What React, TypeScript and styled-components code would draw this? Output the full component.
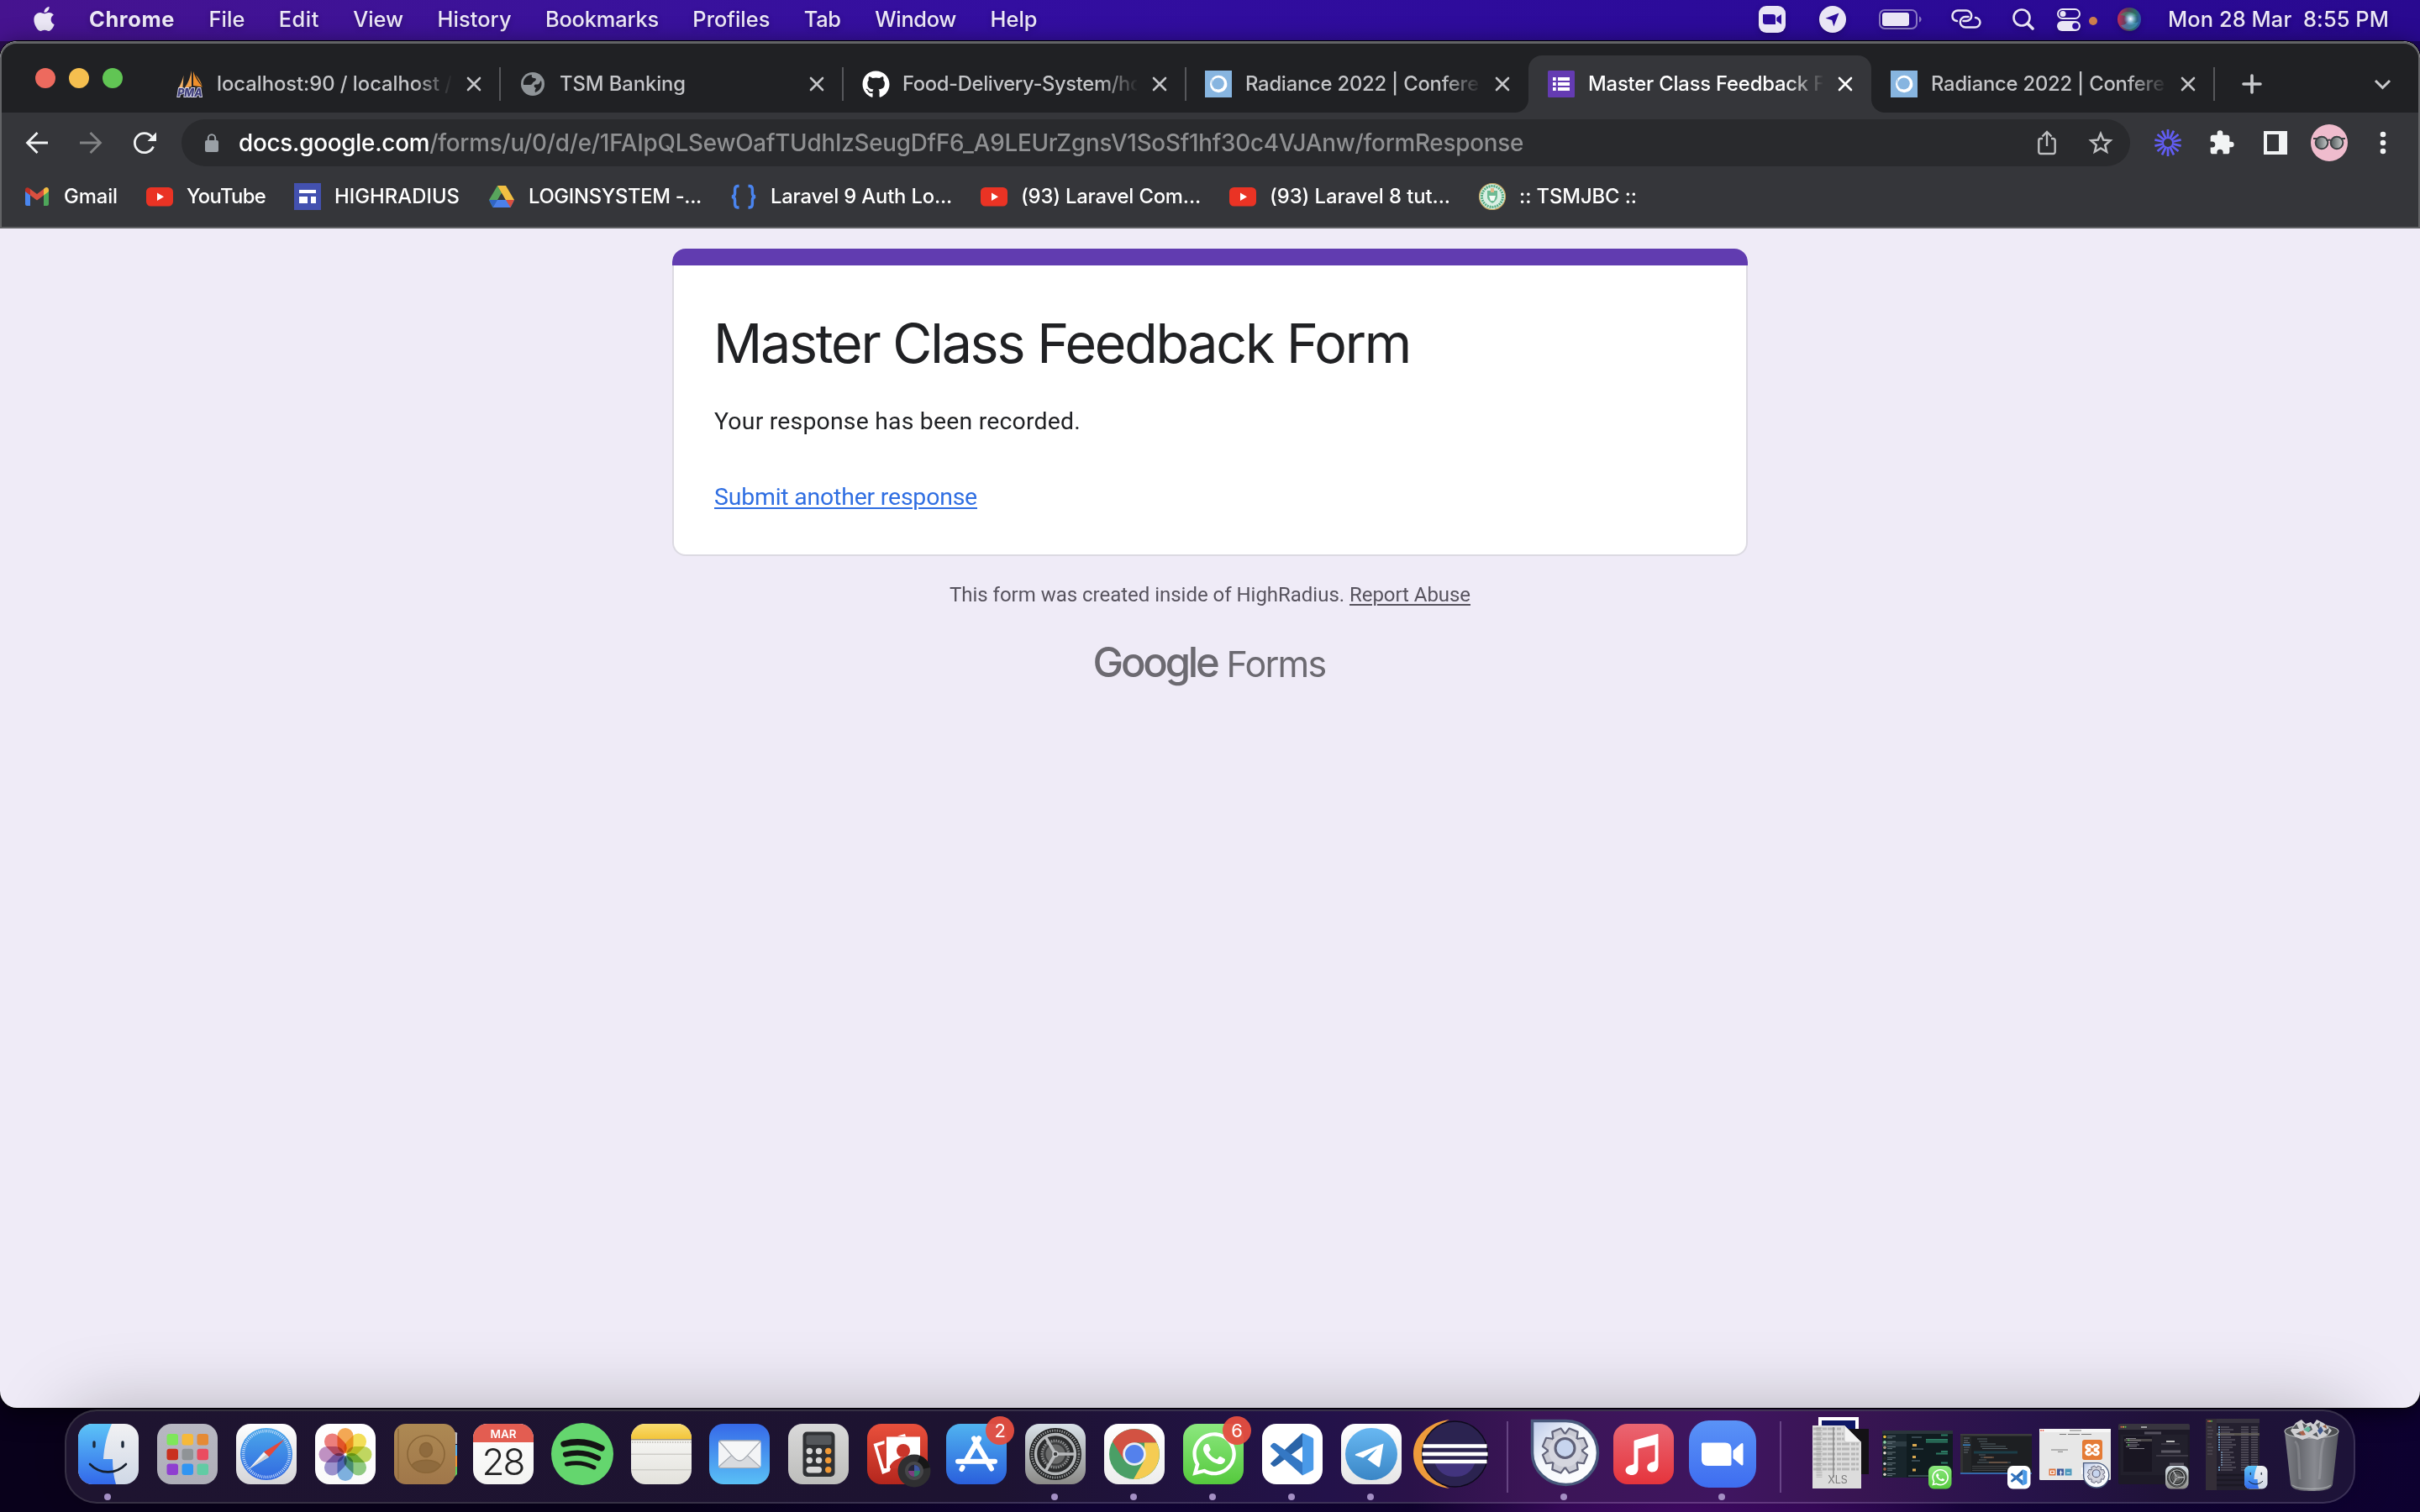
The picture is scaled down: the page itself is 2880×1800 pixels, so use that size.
import React, { useLayoutEffect, useRef, useState } from "react";
import styled, { createGlobalStyle, css } from "styled-components";
import { FaApple, FaGithub, FaWhatsapp } from "react-icons/fa";

const GlobalStyle = createGlobalStyle`
  *, *::before, *::after { box-sizing: border-box; }
  html, body { margin: 0; padding: 0; background: #0a0220; }
  body { width: 2880px; height: 1800px; overflow: hidden; -webkit-font-smoothing: antialiased; }
  svg { display: block; flex: none; overflow: visible; }
`;

const UI = `Inter, "Liberation Sans", sans-serif`;
const BODY = `Roboto, "Liberation Sans", sans-serif`;

/* ---------- tracked text: letter spacing is derived so a label fills its width ---------- */

const Tracked = styled.span<{ $w: number }>`
  display: block;
  flex: none;
  width: ${(p) => p.$w}px;
  white-space: pre;
`;

function Fit({ w, children }: { w: number; children: React.ReactNode }) {
  const ref = useRef<HTMLSpanElement>(null);
  const [spacing, setSpacing] = useState(0);
  useLayoutEffect(() => {
    const el = ref.current;
    if (!el) return;
    const count = (el.textContent || "").length;
    setSpacing((w - el.getBoundingClientRect().width) / count);
  }, [w]);
  return (
    <Tracked $w={w}>
      <span ref={ref} style={{ letterSpacing: spacing }}>
        {children}
      </span>
    </Tracked>
  );
}

/* ---------- desktop ---------- */

const Desktop = styled.div`
  display: flex;
  flex-direction: column;
  width: 2880px;
  height: 1800px;
  overflow: hidden;
  font-family: ${UI};
  background:
    linear-gradient(90deg, #2b0d52 0, #1c0560 100%) 0 0 / 100% 80px no-repeat,
    radial-gradient(ellipse 330px 120px at 2010px 1800px, #450b6c 0, #3c0a62 45%, transparent 100%),
    linear-gradient(90deg, #0a021c 0, #09021c 800px, #13043a 1300px, #10032f 1830px, #2a0650 2050px, #12033a 2450px, #0e0230 100%);
`;

const MenuBar = styled.header`
  display: flex;
  align-items: center;
  flex: none;
  height: 49px;
  padding: 0 37px 3px 39px;
  color: #ece8f6;
  font-size: 25.4px;
  line-height: 46px;
  text-shadow: 0 2px 6px rgba(0, 0, 0, 0.25);
  background: linear-gradient(90deg, #46138f 0, #3a129b 700px, #330ea0 1200px, #2c0b9a 2000px, #290990 100%);
`;

const Menus = styled.nav`
  display: flex;
  gap: 40.4px;
  margin-left: 40px;
  font-weight: 500;
`;

const Menu = styled.span<{ $strong?: boolean }>`
  font-weight: ${(p) => (p.$strong ? 700 : 500)};
`;

const Status = styled.div`
  display: flex;
  align-items: center;
  margin-left: auto;
  font-weight: 500;
`;

const StatusSlot = styled.span<{ $gap: number }>`
  margin-right: ${(p) => p.$gap}px;
  filter: drop-shadow(0 2px 3px rgba(0, 0, 0, 0.25));
`;

/* ---------- browser window ---------- */

const Window = styled.main`
  display: flex;
  flex-direction: column;
  flex: none;
  height: 1627px;
  overflow: hidden;
  border-radius: 20px;
  background: #efebf7;
  box-shadow: 0 0 0 1px #000, 0 6px 30px rgba(0, 0, 0, 0.6);
`;

const Chrome = styled.div`
  flex: none;
  height: 223px;
  margin-top: 0;
  border: 2px solid #626366;
  border-top: 3px solid #626366;
  border-bottom: 2px solid #5f6063;
  border-radius: 20px 20px 0 0;
  background: #35363a;
  overflow: hidden;
`;

const TabStrip = styled.div`
  display: flex;
  align-items: flex-end;
  height: 82px;
  background: #202124;
`;

const Lights = styled.div`
  display: flex;
  gap: 16px;
  align-self: flex-start;
  width: 185px;
  padding: 29px 0 0 40px;
`;

const Light = styled.i<{ $c: string }>`
  width: 24px;
  height: 24px;
  border-radius: 50%;
  background: ${(p) => p.$c};
`;

const TabBox = styled.div<{ $active?: boolean; $divider?: boolean }>`
  position: relative;
  display: flex;
  align-items: center;
  flex: none;
  width: 408px;
  height: 68px;
  padding-left: 23px;
  color: ${(p) => (p.$active ? "#fff" : "#c4c5c8")};
  font-size: 23.8px;
  font-weight: 450;
  line-height: 34px;
  ${(p) =>
    p.$divider &&
    css`
      &::after {
        content: "";
        width: 2px;
        height: 40px;
        margin-left: auto;
        margin-right: -1px;
        background: #56575b;
      }
    `}
  ${(p) =>
    p.$active &&
    css`
      background: #35363a;
      border-radius: 16px 16px 0 0;
      &::before,
      &::after {
        content: "";
        position: absolute;
        bottom: 0;
        width: 16px;
        height: 16px;
      }
      &::before {
        left: -16px;
        background: radial-gradient(circle at 0 0, transparent 15.5px, #35363a 16.5px);
      }
      &::after {
        right: -16px;
        background: radial-gradient(circle at 100% 0, transparent 15.5px, #35363a 16.5px);
      }
    `}
`;

const TabTitle = styled.span`
  width: 280px;
  margin: 0 17.5px 0 15px;
  padding-left: 1px;
  mask-image: linear-gradient(90deg, #000 236px, transparent 282px);
`;

const StripEnd = styled.div`
  display: flex;
  align-items: center;
  justify-content: space-between;
  flex: 1;
  height: 68px;
  padding: 0 33px 0 33px;
`;

const Toolbar = styled.div`
  display: flex;
  align-items: center;
  height: 72px;
  padding-left: 26px;
`;

const ToolSlot = styled.span<{ $gap: number }>`
  margin-right: ${(p) => p.$gap}px;
`;

const Omnibox = styled.div`
  display: flex;
  align-items: center;
  width: 2319px;
  height: 56px;
  margin-right: 29px;
  padding: 0 19px 0 26px;
  border-radius: 28px;
  color: #8f9092;
  font-size: 27.8px;
  font-weight: 450;
  line-height: 40px;
  background: #292a2d;
`;

const Url = styled.span`
  flex: 1;
  margin-left: 22px;
`;

const Host = styled.b`
  font-weight: 480;
  color: #fff;
`;

const Avatar = styled.span`
  display: grid;
  place-items: center;
  width: 44px;
  height: 44px;
  margin-right: 26px;
  border-radius: 50%;
  background: #efbccd;
`;

const Bookmarks = styled.div`
  display: flex;
  align-items: center;
  height: 64px;
  padding: 0 0 8px 26px;
  color: #fff;
  font-size: 23.8px;
  font-weight: 450;
  line-height: 34px;
`;

const Bookmark = styled.span`
  display: flex;
  align-items: center;
  gap: 16px;
  margin-right: 34px;
`;

/* ---------- page ---------- */

const Page = styled.section`
  display: flex;
  flex-direction: column;
  align-items: center;
  flex: 1;
  padding-top: 24px;
  font-family: ${BODY};
`;

const Card = styled.article`
  width: 1280px;
  height: 366px;
  border: 2px solid #dcdae2;
  border-top: 0;
  border-radius: 16px;
  background: #fff;
  overflow: clip;
  overflow-clip-margin: 2px;
`;

const CardBar = styled.div`
  height: 20px;
  margin: 0 -2px;
  border-radius: 16px 16px 0 0;
  background: #613cb0;
`;

const Title = styled.h1`
  margin: 0;
  padding: 53px 0 0 47px;
  color: #202124;
  font-family: ${UI};
  font-size: 64.5px;
  font-weight: 440;
  line-height: 80px;
`;

const Message = styled.p`
  margin: 33px 0 50px 48px;
  color: #202124;
  font-size: 28.4px;
  line-height: 40px;
`;

const Again = styled.a`
  display: block;
  margin-left: 48px;
  color: #2f6ee2;
  font-size: 28.4px;
  line-height: 40px;
  text-decoration: underline;
  text-decoration-thickness: 2px;
  text-underline-offset: 3px;
`;

const Notice = styled.p`
  display: flex;
  margin: 30px 0 0;
  color: #57535e;
  font-size: 24px;
  line-height: 32px;
`;

const Report = styled.a`
  text-decoration: underline;
  text-decoration-thickness: 2px;
  text-underline-offset: 3px;
`;

const Brand = styled.div`
  display: flex;
  align-items: baseline;
  gap: 11px;
  margin: 33px 2px 0 0;
  color: #6c6a71;
  font-family: ${UI};
  font-size: 43px;
  line-height: 64px;
`;

const BrandName = styled.span`
  font-size: 49px;
  font-weight: 470;
`;

/* ---------- dock ---------- */

const Dock = styled.footer`
  display: flex;
  flex: none;
  width: 2726px;
  height: 112px;
  margin: 2px 0 0 77px;
  padding-left: 3px;
  border: 2px solid rgba(255, 255, 255, 0.19);
  border-radius: 38px;
  background: linear-gradient(90deg, #1e1430 0, #1d1331 1100px, #23124a 1500px, #2a1249 1600px, #3b1556 1740px, #3f1560 1980px, #381552 2130px, #27134a 2330px, #1f1238 2500px, #1d1338 100%);
  background-clip: padding-box;
  background-color: #1e1430;
  box-shadow: 0 0 88px rgba(0, 0, 0, 0.26);
`;

const DockCell = styled.span<{ $running?: boolean }>`
  position: relative;
  display: flex;
  align-items: flex-start;
  justify-content: center;
  flex: none;
  width: 93.95px;
  padding-top: 15px;
  ${(p) =>
    p.$running &&
    css`
      &::after {
        content: "";
        position: absolute;
        bottom: 2px;
        left: 42px;
        width: 8px;
        height: 8px;
        border-radius: 50%;
        background: #a48fc4;
      }
    `}
`;

const DockDivider = styled.i<{ $w: number }>`
  display: flex;
  justify-content: center;
  flex: none;
  width: ${(p) => p.$w}px;
  padding: 12px 0 11px;
  &::after {
    content: "";
    width: 2px;
    background: rgba(200, 170, 230, 0.32);
  }
`;

const Badge = styled.b`
  position: absolute;
  top: 6px;
  right: 2px;
  width: 34px;
  height: 34px;
  border-radius: 50%;
  color: #fff;
  font-size: 22px;
  font-weight: 400;
  line-height: 34px;
  text-align: center;
  background: rgba(230, 78, 64, 0.95);
`;

const MiniBadge = styled.span`
  position: absolute;
  right: 6px;
  bottom: 16px;
`;

/* ---------- menu bar icons ---------- */

const W = "#e9e5f5";

const ZoomStatus = () => (
  <svg width="32" height="32" viewBox="0 0 32 32">
    <rect width="32" height="32" rx="9" fill={W} />
    <path d="M5 10h12a3 3 0 0 1 3 3v9H8a3 3 0 0 1-3-3z M21.300 14l5.700-4v12l-5.700-4z" fill="#2c0b9a" />
  </svg>
);
const TelegramStatus = () => (
  <svg width="32" height="32" viewBox="0 0 32 32">
    <circle cx="16" cy="16" r="16" fill={W} />
    <path d="M23.500 8.500 7.500 14.800l7.700 2.200 2.100 7.600z" fill="#2c0b9a" />
  </svg>
);
const Battery = () => (
  <svg width="51" height="24" viewBox="0 0 51 24">
    <rect x="1" y="1" width="44" height="22" rx="6" fill="none" stroke={W} strokeOpacity=".5" strokeWidth="2" />
    <rect x="4" y="4" width="32" height="16" rx="3" fill={W} />
    <path d="M48 8.500c3.500 1.200 3.500 5.800 0 7z" fill={W} opacity=".5" />
  </svg>
);
const Links = () => (
  <svg width="36" height="24" viewBox="0 0 36 24" fill="none" stroke={W} strokeWidth="2.500" strokeLinecap="round">
    <path d="M7 14C3.500 13.500 1.500 11 1.500 8A6.500 6.500 0 0 1 8 1.500h10A6 6 0 0 1 18 14h-3.500" />
    <path d="M29 10c3 .5 5.500 2.700 5.500 5.700A6 6 0 0 1 28.500 21.500H17A6 6 0 0 1 17 9h3.500" />
  </svg>
);
const SearchIcon = () => (
  <svg width="26" height="26" viewBox="0 0 26 26" fill="none" stroke={W}>
    <circle cx="11" cy="11" r="9.500" strokeWidth="2.600" />
    <path d="m18 18 6 6" strokeWidth="3.600" strokeLinecap="round" />
  </svg>
);
const ControlCentre = () => (
  <svg width="28" height="27" viewBox="0 0 28 27">
    <rect x="1" y="1" width="26" height="11" rx="5.500" fill="none" stroke={W} strokeWidth="2" />
    <circle cx="7" cy="6.500" r="3.500" fill={W} />
    <rect y="15" width="28" height="12" rx="6" fill={W} />
    <circle cx="22" cy="21" r="3.800" fill="#2c0b9a" />
  </svg>
);
const OrangeDot = styled.i`
  width: 10px;
  height: 10px;
  margin-top: 4px;
  margin-right: 24px;
  border-radius: 50%;
  background: #cf7f4d;
`;
const Siri = () => (
  <svg width="28" height="28" viewBox="0 0 28 28">
    <defs>
      <linearGradient id="siri" x1="0" y1=".5" x2="1" y2=".6">
        <stop offset="0" stopColor="#c52d5a" />
        <stop offset=".4" stopColor="#57405c" />
        <stop offset=".7" stopColor="#2d6b62" />
        <stop offset="1" stopColor="#2b55b0" />
      </linearGradient>
      <radialGradient id="siriGlow">
        <stop offset="0" stopColor="#fff" />
        <stop offset=".35" stopColor="#bfe3ff" stopOpacity=".8" />
        <stop offset="1" stopColor="#7fc6ff" stopOpacity="0" />
      </radialGradient>
    </defs>
    <circle cx="14" cy="14" r="14" fill="url(#siri)" />
    <path d="M3 9c6-6 14-5 21 1-5-1-8 1-10 4-4-4-7-5-11-5z" fill="#3f9b6c" opacity=".55" />
    <path d="M4 21c5 0 8-3 10-7 3 4 7 5 11 3-2 9-15 13-21 4z" fill="#4aa3d8" opacity=".5" />
    <circle cx="15.500" cy="13.500" r="8" fill="url(#siriGlow)" />
  </svg>
);

/* ---------- favicons ---------- */

const PmaIcon = () => (
  <svg width="32" height="32" viewBox="0 0 32 32">
    <path d="M8.500 5.500 7.500 20 2 21.500c3-4.500 5-10 6.500-16z" fill="#f3b26a" />
    <path d="M18 0v19l-8.500 2c4.500-6 7-13 8.500-21z" fill="#f0a04a" />
    <path d="M20 1c2 7 6 13 11 18.500L20 18z" fill="#ef8f2a" />
    <path d="M22.500 5c4 3.500 6.500 8 8 13.500z" fill="#f39a35" />
    <text x="16" y="31" textAnchor="middle" fontFamily={UI} fontWeight="800" fontStyle="italic" fontSize="12.500" fill="#3c3c78" stroke="#d9d9ea" strokeWidth="1.800" paintOrder="stroke">
      PMA
    </text>
  </svg>
);
const Globe = () => (
  <svg width="32" height="32" viewBox="0 0 32 32">
    <circle cx="16" cy="16" r="14" fill="#8f9498" />
    <path d="M15 5c-1 3 1 4 3 4 3 0 2 3 0 4-3 1-2 4-5 4H5C4 10 9 5 15 5z" fill="#202124" />
    <path d="M26 12c2 6-1 12-7 14-1-2 0-4 1-5-2-1-3-2-2-4 2-1 4 0 5-1 2-1 1-3 3-4z" fill="#202124" />
  </svg>
);
const Radiance = () => (
  <svg width="32" height="32" viewBox="0 0 32 32">
    <rect width="32" height="32" fill="#87b5e0" />
    <circle cx="16.200" cy="16" r="10.200" fill="#fff" />
    <circle cx="15.800" cy="15.500" r="7" fill="#87b5e0" />
    <path d="M19 21.500c3.500-.5 5.500-3 5.500-6.500l2 3-4 6-4.500.5z" fill="#fff" />
    <path d="M8.500 10.500c-1 4.500 0 8.500 4 11.500" fill="none" stroke="#87b5e0" strokeWidth=".9" />
  </svg>
);
const FormsIcon = () => (
  <svg width="32" height="32" viewBox="0 0 32 32">
    <rect width="32" height="32" rx="1.500" fill="#643bb2" />
    <g fill="#fff">
      <path d="M6 8h3.700v4H6zM6 14h3.700v4H6zM6 20h3.700v4H6zM12 8h14v4H12zM12 14h14v4H12zM12 20h14v4H12z" />
    </g>
  </svg>
);
const Close = ({ c }: { c: string }) => (
  <svg width="18" height="18" viewBox="0 0 18 18" stroke={c} strokeWidth="2.600" strokeLinecap="round">
    <path d="m2 2 14 14M16 2 2 16" />
  </svg>
);

const tabs = [
  { icon: <PmaIcon />, title: "localhost:90 / localhost /", w: 280, divider: true },
  { icon: <Globe />, title: "TSM Banking", w: 150, divider: true },
  { icon: <FaGithub size={33} color="#fff" style={{ margin: "0 -0.5px" }} />, title: "Food-Delivery-System/ho", w: 285, divider: true },
  { icon: <Radiance />, title: "Radiance 2022 | Conferen", w: 292 },
  { icon: <FormsIcon />, title: "Master Class Feedback F", w: 282, active: true },
  { icon: <Radiance />, title: "Radiance 2022 | Conferen", w: 292, divider: true },
];

/* ---------- toolbar icons ---------- */

const Arrow = ({ c, flip }: { c: string; flip?: boolean }) => (
  <svg width="32" height="32" viewBox="0 0 32 32" fill="none" stroke={c} strokeWidth="2.800" transform={flip ? "scale(-1 1)" : undefined}>
    <path d="M29 16H5M16.500 4 4.500 16l12 12" />
  </svg>
);
const Reload = () => (
  <svg width="32" height="32" viewBox="0 0 32 32">
    <path d="M26.500 20.500a11.500 11.500 0 1 1-1.800-11.700" fill="none" stroke="#f1f3f4" strokeWidth="2.800" />
    <path d="M30 3.500V14H19.500z" fill="#f1f3f4" />
  </svg>
);
const Lock = () => (
  <svg width="20" height="24" viewBox="0 0 20 24">
    <rect x="2" y="9" width="16" height="14" rx="2" fill="#9aa0a6" />
    <path d="M5.800 9V6.500a4.200 4.200 0 0 1 8.400 0V9" fill="none" stroke="#9aa0a6" strokeWidth="2" />
  </svg>
);
const Share = () => (
  <svg width="32" height="32" viewBox="0 0 32 32" fill="none" stroke="#bdbec0" strokeWidth="2.400">
    <path d="M11 11H8.500A2.200 2.200 0 0 0 6.300 13.200v13.600A2.200 2.200 0 0 0 8.500 29h15a2.200 2.200 0 0 0 2.200-2.200V13.200A2.200 2.200 0 0 0 23.500 11H21M16 20V4M10.500 8.500 16 3l5.500 5.500" />
  </svg>
);
const Star = () => (
  <svg width="32" height="32" viewBox="0 0 32 32" fill="none" stroke="#bdbec0" strokeWidth="2.500">
    <path d="m16 5 3.200 7.600 8.300.7-6.300 5.400 1.900 8-7.100-4.300-7.100 4.300 1.900-8-6.300-5.400 8.300-.7z" />
  </svg>
);
const Burst = () => (
  <svg width="32" height="32" viewBox="-16 -16 32 32" stroke="#625df5" strokeWidth="2.700">
    {Array.from({ length: 14 }, (_, i) => (
      <path key={i} d="M0-6.500V-16" transform={`rotate(${(i * 360) / 14})`} />
    ))}
    <circle r="6" fill="none" strokeWidth="2" />
  </svg>
);
const Puzzle = () => (
  <svg width="32" height="32" viewBox="0 0 24 24">
    <path
      d="M20.500 11H19V7c0-1.100-.9-2-2-2h-4V3.500a2.500 2.500 0 0 0-5 0V5H4c-1.100 0-1.990.9-1.990 2v3.800H3.500a2.700 2.700 0 0 1 0 5.400H2V20c0 1.100.9 2 2 2h3.800v-1.500a2.700 2.700 0 0 1 5.400 0V22H17c1.100 0 2-.9 2-2v-4h1.500a2.500 2.500 0 0 0 0-5z"
      fill="#f1f3f4"
    />
  </svg>
);
const SidePanel = () => (
  <svg width="32" height="32" viewBox="0 0 32 32">
    <path d="M2 2h28v28H2zM6 6v20h14V6z" fill="#f1f3f4" fillRule="evenodd" />
  </svg>
);
const Glasses = () => (
  <svg width="38" height="18" viewBox="0 0 38 18">
    <defs>
      <linearGradient id="lens" x1="0" x2="1">
        <stop offset="0" stopColor="#4e5658" />
        <stop offset="1" stopColor="#c9cdcc" />
      </linearGradient>
    </defs>
    <g fill="url(#lens)" stroke="#3c4143" strokeWidth="2">
      <circle cx="10" cy="9" r="7.300" />
      <circle cx="28" cy="9" r="7.300" />
    </g>
    <path d="M0 4h5M33 4h5M16 7c1.500-2 4.500-2 6 0" stroke="#3c4143" strokeWidth="2.200" fill="none" />
  </svg>
);
const Dots = () => (
  <svg width="32" height="32" viewBox="0 0 32 32" fill="#f1f3f4">
    <circle cx="16" cy="6" r="3.300" />
    <circle cx="16" cy="16" r="3.300" />
    <circle cx="16" cy="26" r="3.300" />
  </svg>
);

/* ---------- bookmark icons ---------- */

const Gmail = () => (
  <svg width="32" height="32" viewBox="0 0 32 32">
    <path d="M2 9v16a2 2 0 0 0 2 2h4V13z" fill="#4a86ee" />
    <path d="M30 9v16a2 2 0 0 1-2 2h-4V13z" fill="#4ea75a" />
    <path d="M24 7v7.500l6-4.500V8.200c0-3.200-3-4.200-5-2.200z" fill="#f2bd42" />
    <path d="M8 14.500V7l8 6 8-6v7.500l-8 6z" fill="#d95040" />
    <path d="M2 8.200V10l6 4.500V7L7 6.200C5 4.600 2 5.200 2 8.200z" fill="#bb3026" />
  </svg>
);
const YouTube = () => (
  <svg width="32" height="32" viewBox="0 0 32 32">
    <rect y="5" width="32" height="22.500" rx="5.500" fill="#ea3324" />
    <path d="m13 11.500 8 4.800-8 4.800z" fill="#fff" />
  </svg>
);
const Sites = () => (
  <svg width="32" height="32" viewBox="0 0 32 32">
    <rect width="32" height="32" fill="#4351af" />
    <path d="M6 8h20v4H6zM6 16h10v8H6zM20 16h6v8h-6z" fill="#fff" />
  </svg>
);
const Drive = () => (
  <svg width="32" height="32" viewBox="0 0 32 32">
    <path d="M11 3h10l-5 9z" fill="#3b8045" />
    <path d="M11 3 1 20l4.500 9L16 12z" fill="#58a55c" />
    <path d="m21 3 10 17H20.500L11 3z" fill="#f1bf42" />
    <path d="M10.500 20H31l-4.500 9h-21z" fill="#4b80ea" />
    <path d="M1 20h10l-5.500 9z" fill="#3165c4" />
    <path d="M21 20h10l-4.500 9z" fill="#d95040" />
    <path d="m16 12-4.700 8h9.400z" fill="#35363a" />
  </svg>
);
const Braces = () => (
  <svg width="32" height="32" viewBox="0 0 32 32" fill="none" stroke="#4a84ee" strokeWidth="3.400">
    <path d="M10.500 3.500H9C6.500 3.500 5.600 4.800 5.600 7.500v4.500c0 2.500-.6 3.800-3.600 4.200 3 .4 3.600 1.800 3.600 4.300v4.500c0 2.700.9 4 3.400 4h1.500" />
    <path d="M21.500 3.500H23c2.500 0 3.400 1.300 3.400 4v4.500c0 2.500.6 3.800 3.600 4.200-3 .4-3.600 1.800-3.600 4.300v4.500c0 2.700-.9 4-3.400 4h-1.500" />
  </svg>
);
const Seal = () => (
  <svg width="32" height="32" viewBox="0 0 32 32">
    <circle cx="16" cy="16" r="15.500" fill="#d9efe3" stroke="#c0a560" strokeWidth="1.200" />
    <circle cx="16" cy="16" r="12.500" fill="none" stroke="#58ad85" strokeWidth="3" strokeDasharray="2 1" />
    <path d="M10 9h12v7c0 4-3 6-6 8-3-2-6-4-6-8z" fill="#6dba93" />
    <path d="M14 6h4v5h-4z" fill="#e3b98a" />
    <path d="M12 15h8l-2 6h-4z" fill="#f3faf5" />
  </svg>
);

const bookmarks = [
  { icon: <Gmail />, label: "Gmail", w: 64 },
  { icon: <YouTube />, label: "YouTube", w: 94 },
  { icon: <Sites />, label: "HIGHRADIUS", w: 149 },
  { icon: <Drive />, label: "LOGINSYSTEM -...", w: 206 },
  { icon: <Braces />, label: "Laravel 9 Auth Lo...", w: 216 },
  { icon: <YouTube />, label: "(93) Laravel Com...", w: 214 },
  { icon: <YouTube />, label: "(93) Laravel 8 tut...", w: 215 },
  { icon: <Seal />, label: ":: TSMJBC ::", w: 140 },
];

/* ---------- dock icons ---------- */

type IconProps = { s?: number };

function Tile({ s = 72, id, top, bottom, children }: { s?: number; id: string; top: string; bottom: string; children?: React.ReactNode }) {
  return (
    <svg width={s} height={s} viewBox="0 0 72 72">
      <defs>
        <linearGradient id={id} x1="0" y1="0" x2="0" y2="1">
          <stop offset="0" stopColor={top} />
          <stop offset="1" stopColor={bottom} />
        </linearGradient>
        <clipPath id={`${id}-clip`}>
          <rect width="72" height="72" rx="17" />
        </clipPath>
      </defs>
      <rect width="72" height="72" rx="17" fill={`url(#${id})`} />
      <g clipPath={`url(#${id}-clip)`}>{children}</g>
    </svg>
  );
}

const Finder = ({ s }: IconProps) => (
  <Tile s={s} id={`finder${s || ""}`} top="#f1f1f3" bottom="#cfd8e6">
    <linearGradient id={`finder-blue${s || ""}`} x1="0" y1="0" x2="0" y2="1">
      <stop offset="0" stopColor="#5cc4f7" />
      <stop offset="1" stopColor="#3268ea" />
    </linearGradient>
    <path d="M0 0h40c-6 13-9 27-10 42h11c0 10 1 20 4 30H0z" fill={`url(#finder-blue${s || ""})`} />
    <path d="M19 22v5M53 22v5" stroke="#1d2a3a" strokeWidth="3.400" strokeLinecap="round" />
    <path d="M14 48c12 12.500 31 12.500 43 0" fill="none" stroke="#16202e" strokeWidth="2.600" strokeLinecap="round" />
  </Tile>
);

const padColors = ["#7ee65b", "#f6b93a", "#e58a35", "#c9301f", "#8f9396", "#ea4c60", "#8f3fd0", "#3195f2", "#62cba4"];
const Launchpad = () => (
  <Tile id="pad" top="#b8b8c2" bottom="#aeaeb8">
    {padColors.map((c, i) => (
      <rect key={c} x={11.500 + (i % 3) * 18} y={12 + Math.floor(i / 3) * 17.700} width="13.500" height="13.500" rx="3" fill={c} />
    ))}
  </Tile>
);

const Safari = () => (
  <Tile id="safari" top="#ffffff" bottom="#d5d5d8">
    <linearGradient id="safari-dial" x1="0" y1="0" x2="0" y2="1">
      <stop offset="0" stopColor="#4ba8ea" />
      <stop offset="1" stopColor="#3168e0" />
    </linearGradient>
    <circle cx="36" cy="36" r="31" fill="url(#safari-dial)" />
    <circle cx="36" cy="36" r="27.500" fill="none" stroke="#d6e6fb" strokeWidth="3.600" strokeDasharray=".9 1.500" />
    <path d="M57.500 18.500 39 39.500l-6-6z" fill="#e5483a" />
    <path d="M15 54 33 33.500l6 6z" fill="#f4f4f6" />
    <path d="M15 54 39 39.500l-3-3z" fill="#c9ccd2" />
  </Tile>
);

const petals = ["#f29a38", "#f1d93c", "#b6cf45", "#7cc06c", "#69a3d9", "#8a7fc4", "#b57fb8", "#e96a66"];
const petalTurns = [0, 45, 90, 135, 180, 225, 270, 315];
const Petal = styled.rect`
  mix-blend-mode: multiply;
`;
const Photos = () => (
  <Tile id="photos" top="#ffffff" bottom="#fafafa">
    {petalTurns.map((a, i) => (
      <Petal key={a} x="26.500" y="5" width="19" height="30" rx="9.500" fill={petals[i]} opacity=".86" transform={`rotate(${a} 36 36.500)`} />
    ))}
  </Tile>
);

const Contacts = () => (
  <svg width="76" height="72" viewBox="-2 0 76 72">
    <path d="M70 10h3a2 2 0 0 1 2 3v11h-5z" fill="#b9b9be" />
    <path d="M70 25h5v13h-5z" fill="#58aee8" />
    <path d="M70 38h5v13h-5z" fill="#ee9334" />
    <path d="M70 51h5v9l-5 5z" fill="#5ccd5c" />
    <linearGradient id="leather" x1="0" y1="0" x2="0" y2="1">
      <stop offset="0" stopColor="#ad8953" />
      <stop offset="1" stopColor="#a0774a" />
    </linearGradient>
    <rect width="73" height="72" rx="14" fill="url(#leather)" />
    <path d="M5 6v60" stroke="#8f6b3c" strokeWidth="1.500" />
    <g fill="none" stroke="#8a6638" strokeWidth="1.600">
      <circle cx="38" cy="36" r="22" />
      <ellipse cx="38" cy="31" rx="7.500" ry="8.500" fill="#8f6b3e" />
      <path d="M21 50c4-9 30-9 34 0-8 11-26 11-34 0z" fill="#8f6b3e" />
    </g>
  </svg>
);

const Calendar = () => (
  <Tile id="cal" top="#ffffff" bottom="#f3f3f1">
    <path d="M0 0h72v22H0z" fill="#e35d51" />
    <text x="36" y="17" textAnchor="middle" fontFamily={UI} fontWeight="600" fontSize="13.500" fill="#fff">
      MAR
    </text>
    <text x="35.500" y="61" textAnchor="middle" fontFamily={UI} fontWeight="300" fontSize="44" letterSpacing="-2" fill="#222">
      28
    </text>
  </Tile>
);

const Spotify = () => (
  <svg width="74" height="74" viewBox="0 0 74 74">
    <circle cx="37" cy="37" r="37" fill="#64d66e" />
    <g fill="none" stroke="#141414" strokeLinecap="round">
      <path d="M15 25c15-4 31-2.500 45 5" strokeWidth="7.400" />
      <path d="M17 37.500c13-3.500 27-2 39 4.500" strokeWidth="6.200" />
      <path d="M18.500 49c11-2.500 22-1.500 32.500 4" strokeWidth="5" />
    </g>
  </svg>
);

const Notes = () => (
  <Tile id="notes" top="#fbfbfa" bottom="#e3e2dc">
    <linearGradient id="notes-top" x1="0" y1="0" x2="0" y2="1">
      <stop offset="0" stopColor="#f9dc70" />
      <stop offset="1" stopColor="#f3c53a" />
    </linearGradient>
    <path d="M0 0h72v18H0z" fill="url(#notes-top)" />
    <path d="M0 18.700h72" stroke="#a79a78" strokeWidth="1.400" />
    <path d="M1 22h72" stroke="#c9c7c0" strokeWidth="2" strokeDasharray="1.500 1.500" />
    <path d="M0 36.300h72M0 54.700h72" stroke="#cfcec9" strokeWidth="1.400" />
  </Tile>
);

const Mail = () => (
  <Tile id="mail" top="#3669e8" bottom="#5ac0f6">
    <rect x="11" y="20" width="50.500" height="32.500" rx="3" fill="#f3f4f6" />
    <path d="m11.500 51 19-17h11l19 17c-1 1.500-2 1.500-3 1.500H14.500c-1.500 0-2.500-.5-3-1.500z" fill="#d9dbdf" stroke="#a6abb3" strokeWidth="1.200" />
    <path d="M12 21c9 9 15 18 20 21.500 2.500 1.800 6 1.800 8.500 0C46 38 52 30 61 21c-1-1-2-1-3-1H14.500c-1 0-2 0-2.500 1z" fill="#f6f7f8" stroke="#a6abb3" strokeWidth="1.300" />
  </Tile>
);

const Calculator = () => (
  <Tile id="calc" top="#d9d9d9" bottom="#bdbdbb">
    <rect x="17.500" y="9.500" width="38" height="53.500" rx="5" fill="#2f3134" />
    <rect x="21.500" y="13.500" width="30" height="11.500" rx="2.500" fill="#54575b" />
    {[32.5, 43.5].map((y) => (
      <g key={y}>
        <circle cx="25.300" cy={y} r="3.700" fill="#d8d8d8" />
        <circle cx="36.500" cy={y} r="3.700" fill="#d8d8d8" />
        <circle cx="47.700" cy={y} r="3.700" fill="#f19a37" />
      </g>
    ))}
    <rect x="21.500" y="51" width="18.500" height="7.500" rx="3.700" fill="#d8d8d8" />
    <circle cx="47.700" cy="54.700" r="3.700" fill="#f19a37" />
  </Tile>
);

const PhotoBooth = () => (
  <svg width="76" height="76" viewBox="-2 0 76 76">
    <linearGradient id="booth" x1="0" y1="0" x2="0" y2="1">
      <stop offset="0" stopColor="#e9503c" />
      <stop offset="1" stopColor="#b4261d" />
    </linearGradient>
    <rect width="72" height="72" rx="17" fill="url(#booth)" />
    <path d="M36 14.500 45 12l1 3.500z" fill="#fff" />
    <path d="m7.500 24 13-4v4l-8.500 2.800L20 53h8l-1 3.500-9 3.500z" fill="#fff" />
    <path d="M23 15.500h40V53H23z" fill="#fff" />
    <circle cx="43" cy="32" r="8" fill="#c9352a" />
    <path d="M27 53V50c4-7 10-8 13-10h6c3 2 9 3 13 10v3z" fill="#c9352a" />
    <circle cx="56" cy="56" r="19.500" fill="#2f2f31" />
    <path d="M56 56 63 38a19.500 19.500 0 0 1 12 14z" fill="#111" opacity=".8" />
    <circle cx="56" cy="56" r="11" fill="#47474a" />
    <circle cx="56" cy="56" r="7.200" fill="#25253a" />
    <path d="M56 49a7 7 0 0 1 7 7h-7z" fill="#3f56a0" />
    <path d="M49 56a7 7 0 0 0 7 7v-7z" fill="#7c3d80" />
    <path d="M56 56h7a7 7 0 0 1-7 7z" fill="#2f8068" />
  </svg>
);

const AppStore = () => (
  <Tile id="store" top="#50b3f0" bottom="#2a5fdc">
    <g stroke="#fff" strokeWidth="6" strokeLinecap="round">
      <path d="M33 17.500 54 53.500M39 17.500 26 40M19.500 52l-1 2M14 44.800h44" />
      <path d="M39 17.500 24.500 42.500" />
    </g>
  </Tile>
);

const Preferences = ({ s }: IconProps) => (
  <Tile s={s} id={`prefs${s || ""}`} top="#d8e1e8" bottom="#8b8a87">
    <circle cx="36" cy="36" r="31" fill="#1f2021" />
    <circle cx="36" cy="36" r="28" fill="none" stroke="#8f9294" strokeWidth="3" strokeDasharray="1.500 1.400" />
    <circle cx="36" cy="36" r="23.500" fill="#2b2c2d" stroke="#b4b7b9" strokeWidth="3.400" />
    <circle cx="36" cy="36" r="16" fill="#4c4d4e" stroke="#8e9091" strokeWidth="3" strokeDasharray="1.500 1.400" />
    <circle cx="36" cy="36" r="12.500" fill="#6a6b6b" stroke="#3a3b3c" strokeWidth="2" />
    <path d="M36 36h24M36 36 24 15.200M36 36 24 56.800" stroke="#b9bbbd" strokeWidth="3.600" />
    <circle cx="36" cy="36" r="3" fill="#3b3c3d" stroke="#c9cbcd" strokeWidth="1.500" />
  </Tile>
);

const ChromeApp = () => (
  <Tile id="chrome" top="#ffffff" bottom="#ededed">
    <circle cx="36" cy="36" r="30" fill="#4a9f66" />
    <path d="M10 21a30 30 0 0 1 52.500 1.500H36L23.500 43z" fill="#d25242" />
    <path d="M62.500 22.500A30 30 0 0 1 35 66l13-23V22.500z" fill="#f5cc53" />
    <circle cx="36" cy="36" r="13.800" fill="#eceef2" />
    <circle cx="36" cy="36" r="11" fill="#5481ec" />
  </Tile>
);

const WhatsApp = ({ s }: IconProps) => (
  <Tile s={s} id={`wa${s || ""}`} top="#8ce87f" bottom="#55c93d">
    <g transform="translate(7.500 6.500)">
      <FaWhatsapp size={59} color="#fff" />
    </g>
  </Tile>
);

const VsCode = ({ s }: IconProps) => (
  <Tile s={s} id={`vs${s || ""}`} top="#ffffff" bottom="#ffffff">
    <path d="M10.500 46.500 48 11v16L16 50.500c-1.500.8-2.500.6-3.500-.4l-2-1.800c-.6-.6-.6-1.300 0-1.800z" fill="#2a64a8" />
    <path d="m10.500 25.500 2-2c1-1 2.300-1 3.500-.2L48 46v15.500L10.500 27.800c-.7-.7-.7-1.600 0-2.300z" fill="#3578c4" />
    <path d="M48 11 60 16.500c.8.500 1.200 1.200 1.200 2v35c0 .9-.4 1.600-1.200 2l-12 6z" fill="#4a9ae8" />
  </Tile>
);

const Telegram = () => (
  <Tile id="tg" top="#ffffff" bottom="#e6e6e6">
    <linearGradient id="tg-disc" x1="0" y1="0" x2="0" y2="1">
      <stop offset="0" stopColor="#68b8f2" />
      <stop offset="1" stopColor="#3a86c6" />
    </linearGradient>
    <circle cx="36" cy="36" r="31" fill="url(#tg-disc)" />
    <path d="M50.500 23.500 17.500 36c-1 .6-.8 1.500 0 1.800l8.500 2.700 17-11-11.500 13 12.500 8.800c1 .6 2 .2 2.200-1z" fill="#fff" />
  </Tile>
);

const Eclipse = () => (
  <svg width="90" height="82" viewBox="0 0 90 82">
    <path d="M44 0C20 3 1 19 1 41s19 38 43 41C28 74 12 60 12 41S28 8 44 0z" fill="#ee9b3b" />
    <circle cx="50.500" cy="41" r="39" fill="#2b2350" stroke="#0d0a1c" strokeWidth="1.500" />
    <path d="M26 50h49c-4 12-12 18-24.500 18S30 62 26 50z" fill="#42347e" />
    <path d="M12.500 31.500h76M11.500 41h78M12.500 50h76" stroke="#fff" strokeWidth="4.600" />
  </svg>
);

const gearTurns = [0, 45, 90, 135, 180, 225, 270, 315];
const XamppManager = ({ s = 80 }: IconProps) => (
  <svg width={s} height={s} viewBox="0 0 80 80">
    <linearGradient id={`drop${s}`} x1="0" y1="0" x2="1" y2="1">
      <stop offset="0" stopColor="#b9c8e8" />
      <stop offset=".4" stopColor="#f4f7fc" />
      <stop offset="1" stopColor="#ffffff" />
    </linearGradient>
    <path d="M1.500 1.500h40a38 38 0 0 1 38 38 38 38 0 0 1-38 38A40 38 0 0 1 1.500 40z" fill={`url(#drop${s})`} stroke="#48597c" strokeWidth="3.500" />
    <g fill="#c9cad4" stroke="#62647a" strokeWidth="2.200" strokeLinejoin="round">
      {gearTurns.map((a) => (
        <path key={a} d="m32.500 20 2.500-9.500h11l2.500 9.500z" transform={`rotate(${a + 22.5} 40.500 37)`} />
      ))}
    </g>
    <circle cx="40.500" cy="37" r="19.500" fill="#d5d6df" />
    <circle cx="40.500" cy="34" r="11.500" fill="#c7d5ee" stroke="#5f6178" strokeWidth="3" />
  </svg>
);

const Music = () => (
  <Tile id="music" top="#ea6672" bottom="#e5343c">
    <path d="M26 19.500 52.500 12c.8 0 1 .4 1 1v36.500c0 5-3 8-7 8s-6.200-2.500-6.200-5.500c0-3.500 3-5.800 6.500-6.500 1.800-.4 2.700-.8 2.700-2.500V25l-20 4.500v24c0 5-3.500 7.500-7.500 7.500S14.500 58.500 14.500 55.500c0-3.500 2.800-5.500 6.500-6.300 2.500-.5 3.500-.9 3.500-3V21.500c0-1.300.3-1.700 1.500-2z" fill="#fff" />
  </Tile>
);

const ZoomApp = () => (
  <svg width="80" height="80" viewBox="0 0 80 80">
    <linearGradient id="zoomApp" x1="0" y1="0" x2="0" y2="1">
      <stop offset="0" stopColor="#5a93f7" />
      <stop offset="1" stopColor="#3e6df0" />
    </linearGradient>
    <rect width="80" height="80" rx="24" fill="url(#zoomApp)" />
    <path d="M15 28.500c0-1.500.8-2 2-2h26c5 0 7.500 3 7.500 7.500V52c0 1.200-.6 2-2 2h-26c-5 0-7.500-3-7.500-7.500zM52.500 36l9.500-8.500c1.500-1 2.500-.7 2.500 1V52c0 1.500-1 2-2.500 1L52.500 45z" fill="#fff" />
  </svg>
);

const XlsStack = () => (
  <svg width="70" height="90" viewBox="0 0 70 90">
    <path d="M4 0h48v20H4z" fill="#fff" />
    <path d="M8 4h40v12H8z" fill="#0e1766" />
    <path d="M0 14h64v54H0z" fill="#141216" />
    <path d="M-3 10h38l20 20v55H-3z" fill="#dcdcdc" />
    <path d="M-1 12v60" stroke="#8b8b8b" strokeWidth="7" strokeDasharray="2 .8" opacity=".35" transform="translate(6 0)" />
    <path d="M-2 14h34M-2 20h36M-2 26h38M-2 32h54M-2 38h54M-2 44h54M-2 50h54M-2 56h54M-2 62h54" stroke="#9d9d9d" strokeWidth="3" strokeDasharray="9 2 5 1" opacity=".6" />
    <path d="M22 12v60" stroke="#777" strokeWidth="2" opacity=".6" />
    <path d="M35 10v17c0 2 1 3 3 3h17z" fill="#f3f3f3" stroke="#bbb" strokeWidth=".8" />
    <text x="27" y="79" textAnchor="middle" fontFamily={UI} fontSize="12.500" fill="#7c7c7c">
      XLS
    </text>
  </svg>
);

const WhatsAppWindow = () => (
  <svg width="84" height="56" viewBox="0 0 84 56">
    <rect width="84" height="56" rx="1" fill="#101c20" />
    <path d="M0 0h29v56H0z" fill="#18252b" />
    <path d="M0 0h84v4H0z" fill="#2a353b" />
    <path d="M0 13h29v6H0z" fill="#2d3c43" />
    {["#e9b93c", "#8fd0a8", "#b09580", "#e8e0d4", "#2e2a2a", "#c7cdd1", "#9f5a43", "#d8d2c8"].map((c, i) => (
      <g key={c}>
        <circle cx="3" cy={7.500 + i * 6.400} r="1.800" fill={c} />
        <path d={`M6 ${6.800 + i * 6.400}h10M6 ${8.800 + i * 6.400}h6`} stroke="#6f7f87" strokeWidth=".9" />
      </g>
    ))}
    <path d="M70 5.500h8M52 11h26M52 13.500h26M70 25h8M64 27.500h14M70 38.500h8M62 50h16" stroke="#2c7a62" strokeWidth="2" />
    <path d="M35 8h12M35 22h14M35 36h10M31 54h46" stroke="#36474f" strokeWidth="2.200" />
    <path d="M36 17.500h5M36 31.500h4M36 47h4" stroke="#d9a850" strokeWidth="3" />
  </svg>
);

const CodeWindow = () => (
  <svg width="85" height="48" viewBox="0 0 85 48">
    <rect width="85" height="48" fill="#1d1f22" />
    <path d="M0 0h85v2.500H0z" fill="#3c3d3d" />
    <path d="M0 2.500h3V46H0z" fill="#333" />
    <path d="M3 2.500h10V46H3z" fill="#252729" />
    <path d="M4 5h7M4 8h5M4 10.500h7M4 16h7M4 19h6M4 22h5" stroke="#6c7378" strokeWidth=".9" />
    <path d="M3 13.200h9" stroke="#3d8fd6" strokeWidth="1.400" />
    <path d="M20 6h12M22 9h10M24 12h18M24 15h30M26 17.500h30M22 25h8M24 28h14M22 31h9M20 34h40" stroke="#5a686e" strokeWidth=".9" />
    <path d="M16 22h52" stroke="#1c3d47" strokeWidth="3" />
    <path d="M28 28h12M34 34h22" stroke="#a06b48" strokeWidth=".9" />
    <path d="M14 38.500h60M14 41h50M14 43.500h40" stroke="#484b4e" strokeWidth=".9" />
    <path d="M0 47h85" stroke="#3c81d8" strokeWidth="1.600" />
  </svg>
);

const XamppWindow = () => (
  <svg width="85" height="61" viewBox="0 0 85 61">
    <rect width="85" height="61" rx="1.500" fill="#e7e7e7" />
    <path d="M0 0h85v4H0z" fill="#f6f6f6" />
    <circle cx="2" cy="2" r=".9" fill="#e8604f" />
    <circle cx="4.500" cy="2" r=".9" fill="#e8604f" />
    <path d="M36 2h14M24 6.500h8M34 6.500h14M50 6.500h12" stroke="#777" strokeWidth="1.100" />
    <path d="M14 25h20M22 27.300h6" stroke="#666" strokeWidth=".8" />
    <rect x="51" y="13" width="24" height="24" rx="3" fill="#e57b35" />
    <g fill="none" stroke="#fff" strokeWidth="2.800" strokeLinecap="round">
      <path d="M60 24c-4 0-5-2-4-3.500s4-2 5.500 0c1 1.500 2 1.500 3 0 1.500-2 4.500-1.500 5.500 0s0 3.500-4 3.500" />
      <path d="M60 26c-4 0-5 2-4 3.500s4 2 5.500 0c1-1.500 2-1.500 3 0 1.500 2 4.500 1.500 5.500 0s0-3.500-4-3.500" />
    </g>
    <path d="M11.500 47.500h8v8h-8z" fill="#dd7440" />
    <path d="M21 47.500h8v8h-8z" fill="#3e5a9c" />
    <path d="M30.500 47.500h8v8h-8z" fill="#4f9abd" />
    <path d="M13.500 50h4v3.500h-4z M25.500 49.500v6M24 52h3.500 M32.500 52.500h4" stroke="#fff" strokeWidth="1.200" fill="none" />
    <path d="M50 46h6v8h-6z" fill="#fff" />
  </svg>
);

const SettingsWindow = () => (
  <svg width="85" height="72" viewBox="0 0 85 72">
    <rect width="85" height="72" rx="2" fill="#1d1a27" />
    <path d="M0 2a2 2 0 0 1 2-2h81a2 2 0 0 1 2 2v5H0z" fill="#38353f" />
    <circle cx="3.500" cy="3.800" r="1" fill="#e8604f" />
    <circle cx="6" cy="3.800" r="1" fill="#eab046" />
    <circle cx="8.500" cy="3.800" r="1" fill="#5bc24f" />
    <path d="M27 4h7" stroke="#ccc" strokeWidth="1.400" />
    <path d="M31 11h20" stroke="#55515e" strokeWidth="3" />
    <rect x="2.500" y="13" width="80" height="48" fill="#22202c" />
    <rect x="6" y="15" width="34" height="42" fill="#191622" />
    <path d="M7 19.500h33" stroke="#4a4748" strokeWidth="3" />
    <path d="M9 17.500h12M13 20h14M9 22.500h14M13 25h12M9 27h13M13 29.500h18" stroke="#8a8790" strokeWidth=".9" />
    <path d="M11 19.500h2M11 25h2" stroke="#59c25a" strokeWidth="1.400" />
    <path d="M57 21h10" stroke="#bbb" strokeWidth="2" />
    <path d="M51 24h22M45 38h38" stroke="#605c68" strokeWidth=".9" />
    <path d="M51 33h23M61 48h17" stroke="#5b5863" strokeWidth="3.200" />
  </svg>
);

const FinderWindow = () => (
  <svg width="64" height="85" viewBox="0 0 64 85">
    <rect width="64" height="85" rx="1.500" fill="#24202f" />
    <path d="M0 0h13v85H0z" fill="#342e38" />
    <path d="M13 0h51v5H13z" fill="#37333f" />
    <circle cx="3" cy="2.800" r=".9" fill="#e8604f" />
    <circle cx="5" cy="2.800" r=".9" fill="#eab046" />
    <circle cx="7" cy="2.800" r=".9" fill="#5bc24f" />
    <path d="M2 10h5M2 14h7M2 18h6M2 22h6M2 30h5M2 34h7M2 38h6M2 42h6" stroke="#5d5760" strokeWidth="1" />
    <path d="M13 18.500h51" stroke="#59554f" strokeWidth="3" />
    {Array.from({ length: 18 }, (_, i) => (
      <g key={i}>
        <path d={`M${15 + (i > 9 && i < 16 ? 3 : 0)} ${10 + i * 3}h2`} stroke="#7db7e6" strokeWidth="1.400" />
        <path d={`M18 ${10 + i * 3}h${10 + ((i * 5) % 9)}M42 ${10 + i * 3}h9M54 ${10 + i * 3}h8`} stroke="#6f6b76" strokeWidth="1" />
      </g>
    ))}
    <path d="M13 67h51M13 73h51M13 79h51" stroke="#1b1824" strokeWidth="2.500" />
  </svg>
);

const Trash = () => (
  <svg width="66" height="88" viewBox="0 0 66 88">
    <defs>
      <linearGradient id="bin" x1="0" x2="1">
        <stop offset="0" stopColor="#8a8d90" />
        <stop offset=".25" stopColor="#6d7073" />
        <stop offset=".55" stopColor="#94979a" />
        <stop offset="1" stopColor="#5d6063" />
      </linearGradient>
    </defs>
    <path d="M1 17h64l-7 62c-1 5-7 8-25 8S9 84 8 79z" fill="url(#bin)" opacity=".9" />
    <ellipse cx="33" cy="16" rx="32" ry="8" fill="#4b4d50" stroke="#a9acae" strokeWidth="1.300" />
    <path d="m8 15 6-9 7-4 5 5 6-2 3 3 4-6 8 4 4 3 6 6-5 6-12 5-10-3-8 3-9-4z" fill="#cfcfd2" />
    <path d="m10 13 5-6 3 6zM22 6l6 3-4 4zM27 12l5-3 2 5-5 3zM38 8l5-3-1 9zM47 16l7-4-2 8zM14 19l6-3 1 5zM34 20l5-3 2 6z" fill="#55585c" />
    <path d="m23 14 6-4 3 3-3 4z" fill="#62b49b" />
    <path d="m18 17 5-2 3 5-4 1z" fill="#a9634a" />
    <path d="m40 15 4-5 3 5-4 5z" fill="#41588c" />
    <path d="m46 10 4-2 1 5z" fill="#9b6344" />
    <path d="M13 28c6 3 4 20 6 45M48 25c-6 14-3 34-6 48" stroke="#c6c9cb" strokeWidth="3" fill="none" opacity=".25" />
    <path d="M10 80c8 6 38 6 46 0" stroke="#c3c6c8" strokeWidth="1.500" fill="none" opacity=".6" />
  </svg>
);

const Lift = styled.span<{ $y: number; $x?: number }>`
  margin-top: ${(p) => p.$y}px;
  margin-left: ${(p) => p.$x || 0}px;
`;

const apps: { icon: React.ReactNode; running?: boolean; badge?: string; y?: number }[] = [
  { icon: <Finder />, running: true },
  { icon: <Launchpad /> },
  { icon: <Safari /> },
  { icon: <Photos /> },
  { icon: <Contacts /> },
  { icon: <Calendar /> },
  { icon: <Spotify />, y: -1 },
  { icon: <Notes /> },
  { icon: <Mail /> },
  { icon: <Calculator /> },
  { icon: <PhotoBooth /> },
  { icon: <AppStore />, badge: "2" },
  { icon: <Preferences />, running: true },
  { icon: <ChromeApp />, running: true },
  { icon: <WhatsApp />, running: true, badge: "6" },
  { icon: <VsCode />, running: true },
  { icon: <Telegram />, running: true },
  { icon: <Eclipse />, y: -5 },
];

const recent = [
  { icon: <XamppManager />, running: true, y: -5 },
  { icon: <Music /> },
  { icon: <ZoomApp />, running: true, y: -4 },
];

const minimized = [
  { icon: <XlsStack />, y: -8, x: 15 },
  { icon: <WhatsAppWindow />, y: 8, mini: <WhatsApp s={27.5} /> },
  { icon: <CodeWindow />, y: 12, mini: <VsCode s={27.5} /> },
  { icon: <XamppWindow />, y: 6, mini: <XamppManager s={31} /> },
  { icon: <SettingsWindow />, y: 0, mini: <Preferences s={27.5} /> },
  { icon: <FinderWindow />, y: -6, mini: <Finder s={27.5} /> },
  { icon: <Trash />, y: -7 },
];

const menus = [
  { label: "Chrome", w: 102, strong: true },
  { label: "File", w: 43 },
  { label: "Edit", w: 48 },
  { label: "View", w: 60 },
  { label: "History", w: 88 },
  { label: "Bookmarks", w: 135 },
  { label: "Profiles", w: 92 },
  { label: "Tab", w: 44 },
  { label: "Window", w: 97 },
  { label: "Help", w: 56 },
];

export default function App() {
  return (
    <Desktop>
      <GlobalStyle />
      <MenuBar>
        <FaApple size={33} style={{ margin: "-2px -3px 0 -3px" }} />
        <Menus>
          {menus.map((m) => (
            <Menu key={m.label} $strong={m.strong}>
              <Fit w={m.w}>{m.label}</Fit>
            </Menu>
          ))}
        </Menus>
        <Status>
          <StatusSlot $gap={40}><ZoomStatus /></StatusSlot>
          <StatusSlot $gap={39}><TelegramStatus /></StatusSlot>
          <StatusSlot $gap={35}><Battery /></StatusSlot>
          <StatusSlot $gap={37}><Links /></StatusSlot>
          <StatusSlot $gap={27}><SearchIcon /></StatusSlot>
          <StatusSlot $gap={10}><ControlCentre /></StatusSlot>
          <OrangeDot />
          <StatusSlot $gap={32}><Siri /></StatusSlot>
          <Fit w={263}>{"Mon 28 Mar  8:55 PM"}</Fit>
        </Status>
      </MenuBar>

      <Window>
        <Chrome>
          <TabStrip>
            <Lights>
              <Light $c="#ed6a5e" />
              <Light $c="#f5bf4f" />
              <Light $c="#61c554" />
            </Lights>
            {tabs.map((t, i) => (
              <TabBox key={i} $active={t.active} $divider={t.divider}>
                {t.icon}
                <TabTitle>
                  <Fit w={t.w}>{t.title}</Fit>
                </TabTitle>
                <Close c={t.active ? "#fff" : "#c4c5c8"} />
              </TabBox>
            ))}
            <StripEnd>
              <svg width="24" height="24" viewBox="0 0 24 24" stroke="#c9cacd" strokeWidth="3.600" strokeLinecap="round">
                <path d="M12 2v20M2 12h20" />
              </svg>
              <svg width="19" height="12" viewBox="0 0 19 12" fill="none" stroke="#c9cacd" strokeWidth="3">
                <path d="m1 2 8.500 8.500L18 2" />
              </svg>
            </StripEnd>
          </TabStrip>
          <Toolbar>
            <ToolSlot $gap={32}><Arrow c="#f1f3f4" /></ToolSlot>
            <ToolSlot $gap={32}><Arrow c="#828385" flip /></ToolSlot>
            <ToolSlot $gap={28}><Reload /></ToolSlot>
            <Omnibox>
              <Lock />
              <Url>
                <Fit w={1529}>
                  <Host>docs.google.com</Host>/forms/u/0/d/e/1FAIpQLSewOafTUdhIzSeugDfF6_A9LEUrZgnsV1SoSf1hf30c4VJAnw/formResponse
                </Fit>
              </Url>
              <ToolSlot $gap={32}><Share /></ToolSlot>
              <Star />
            </Omnibox>
            <ToolSlot $gap={32}><Burst /></ToolSlot>
            <ToolSlot $gap={32}><Puzzle /></ToolSlot>
            <ToolSlot $gap={26}><SidePanel /></ToolSlot>
            <Avatar><Glasses /></Avatar>
            <Dots />
          </Toolbar>
          <Bookmarks>
            {bookmarks.map((b) => (
              <Bookmark key={b.label}>
                {b.icon}
                <Fit w={b.w}>{b.label}</Fit>
              </Bookmark>
            ))}
          </Bookmarks>
        </Chrome>

        <Page>
          <Card>
            <CardBar />
            <Title>
              <Fit w={829}>Master Class Feedback Form</Fit>
            </Title>
            <Message>
              <Fit w={436}>Your response has been recorded.</Fit>
            </Message>
            <Again>
              <Fit w={313}>Submit another response</Fit>
            </Again>
          </Card>
          <Notice>
            <Fit w={476}>{"This form was created inside of HighRadius. "}</Fit>
            <Report>
              <Fit w={144}>Report Abuse</Fit>
            </Report>
          </Notice>
          <Brand>
            <BrandName>
              <Fit w={148}>Google</Fit>
            </BrandName>
            <Fit w={118}>Forms</Fit>
          </Brand>
        </Page>
      </Window>

      <Dock>
        {apps.map((a, i) => (
          <DockCell key={i} $running={a.running}>
            <Lift $y={a.y || 0}>{a.icon}</Lift>
            {a.badge && <Badge>{a.badge}</Badge>}
          </DockCell>
        ))}
        <DockDivider $w={42} />
        {recent.map((a, i) => (
          <DockCell key={i} $running={a.running}>
            <Lift $y={a.y || 0}>{a.icon}</Lift>
          </DockCell>
        ))}
        <DockDivider $w={44} />
        {minimized.map((a, i) => (
          <DockCell key={i}>
            <Lift $y={a.y} $x={a.x}>{a.icon}</Lift>
            {a.mini && <MiniBadge>{a.mini}</MiniBadge>}
          </DockCell>
        ))}
      </Dock>
    </Desktop>
  );
}
